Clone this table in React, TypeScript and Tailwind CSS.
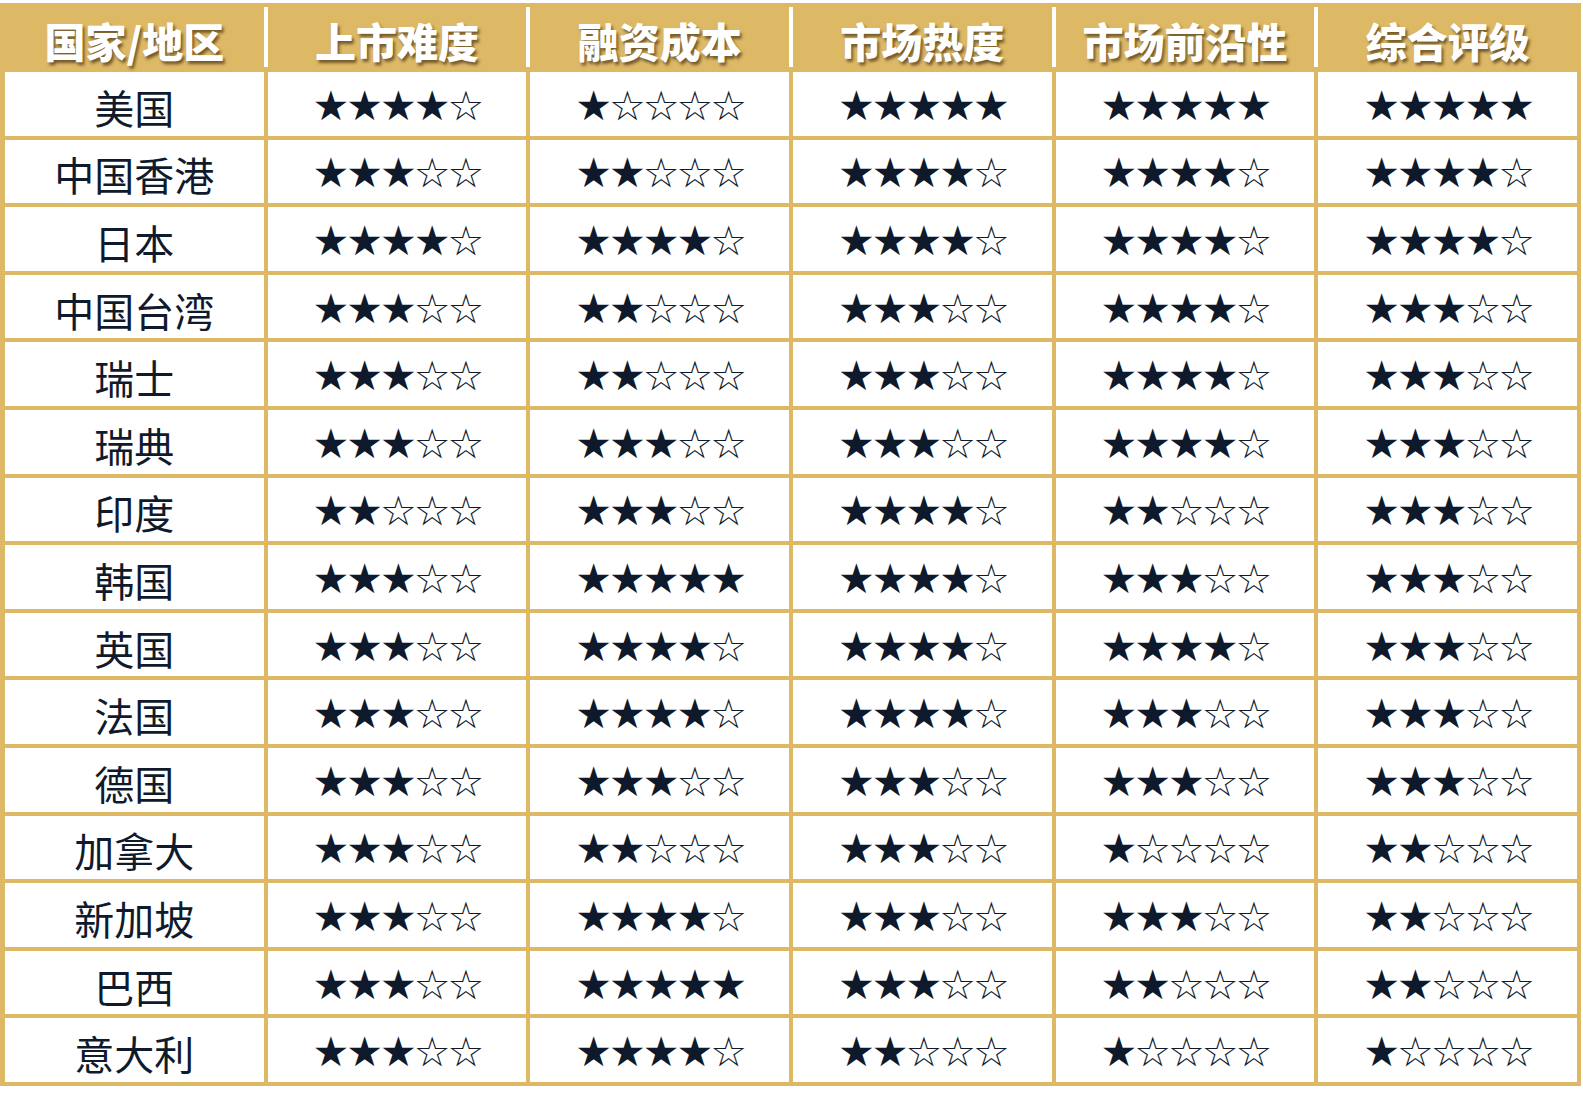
import React from "react";

const headers = ["国家/地区", "上市难度", "融资成本", "市场热度", "市场前沿性", "综合评级"];

const rows: [string, number[]][] = [
  ["美国", [4, 1, 5, 5, 5]],
  ["中国香港", [3, 2, 4, 4, 4]],
  ["日本", [4, 4, 4, 4, 4]],
  ["中国台湾", [3, 2, 3, 4, 3]],
  ["瑞士", [3, 2, 3, 4, 3]],
  ["瑞典", [3, 3, 3, 4, 3]],
  ["印度", [2, 3, 4, 2, 3]],
  ["韩国", [3, 5, 4, 3, 3]],
  ["英国", [3, 4, 4, 4, 3]],
  ["法国", [3, 4, 4, 3, 3]],
  ["德国", [3, 3, 3, 3, 3]],
  ["加拿大", [3, 2, 3, 1, 2]],
  ["新加坡", [3, 4, 3, 3, 2]],
  ["巴西", [3, 5, 3, 2, 2]],
  ["意大利", [3, 4, 2, 1, 1]],
];

const cjk = { fontFamily: '"Noto Sans CJK SC", "Noto Sans", sans-serif' };
const starFont = { fontFamily: '"DejaVu Sans", sans-serif' };

const Stars = ({ n }: { n: number }) => (
  <span className="text-[41px] leading-none tracking-[-3px] text-[#0e1a2c]" style={starFont}>
    {"★".repeat(n) + "☆".repeat(5 - n)}
  </span>
);

export default function App() {
  return (
    <div className="bg-white w-[1583px] h-[1100px] pt-[3px]">
      <div className="w-[1581px] bg-[#ddb966] pl-[5px] pr-[4px] pb-[4px]">
        <div className="flex h-[69px]" style={cjk}>
          {headers.map((h, i) => (
            <React.Fragment key={h}>
              {i > 0 && <div className="w-[4px] mt-[4px] mb-[5px] bg-white" />}
              <div
                className="flex-1 flex items-center justify-center pt-[6px] text-[41px] font-black text-white leading-none"
                style={{ textShadow: "2px 3px 3px rgba(60,40,10,0.65)" }}
              >
                {h}
              </div>
            </React.Fragment>
          ))}
        </div>
        <div className="grid grid-cols-6 gap-[4px] auto-rows-[63.6px]">
          {rows.map(([name, vals]) => (
            <React.Fragment key={name}>
              <div
                className="bg-white flex items-center justify-center pt-[6px] text-[40px] leading-none text-[#0f1b2d]"
                style={cjk}
              >
                {name}
              </div>
              {vals.map((v, j) => (
                <div key={j} className="bg-white flex items-center justify-center pt-[5px]">
                  <Stars n={v} />
                </div>
              ))}
            </React.Fragment>
          ))}
        </div>
      </div>
    </div>
  );
}
